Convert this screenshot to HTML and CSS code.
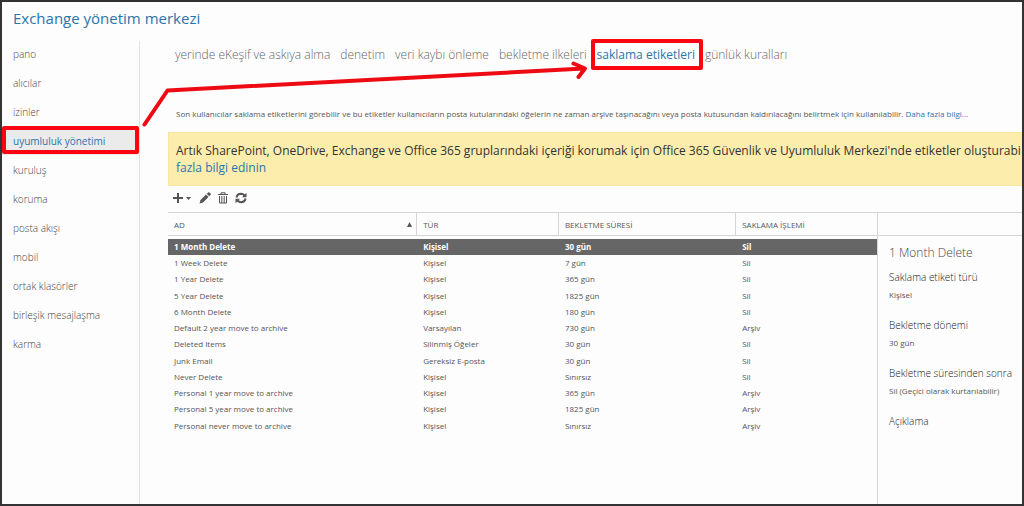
FILE: index.html
```
<!DOCTYPE html>
<html lang="tr">
<head>
<meta charset="utf-8">
<title>Exchange yönetim merkezi</title>
<link rel="stylesheet" href="styles.css">
</head>
<body>
<div class="frame">
  <header class="brand"><h1>Exchange yönetim merkezi</h1></header>
  <div class="body">
    <nav class="side" aria-label="Ana menü">
      <a href="#">pano</a>
      <a href="#">alıcılar</a>
      <a href="#">izinler</a>
      <a href="#" class="active marked" aria-current="page">uyumluluk yönetimi</a>
      <a href="#">kuruluş</a>
      <a href="#">koruma</a>
      <a href="#">posta akışı</a>
      <a href="#">mobil</a>
      <a href="#">ortak klasörler</a>
      <a href="#">birleşik mesajlaşma</a>
      <a href="#">karma</a>
    </nav>
    <main class="main">
      <nav class="tabs" aria-label="Sekmeler">
        <a href="#">yerinde eKeşif ve askıya alma</a>
        <a href="#">denetim</a>
        <a href="#">veri kaybı önleme</a>
        <a href="#">bekletme ilkeleri</a>
        <a href="#" class="active marked" aria-current="page">saklama etiketleri</a>
        <a href="#">günlük kuralları</a>
      </nav>
      <p class="intro">Son kullanıcılar saklama etiketlerini görebilir ve bu etiketler kullanıcıların posta kutularındaki öğelerin ne zaman arşive taşınacağını veya posta kutusundan kaldırılacağını belirtmek için kullanılabilir. <a href="#">Daha fazla bilgi...</a></p>
      <div class="banner">Artık SharePoint, OneDrive, Exchange ve Office 365 gruplarındaki içeriği korumak için Office 365 Güvenlik ve Uyumluluk Merkezi'nde etiketler oluşturabi<br><a href="#">fazla bilgi edinin</a></div>
      <div class="toolbar">
        <button type="button" aria-label="Yeni"><svg width="20" height="12" viewBox="0 0 20 12"><path d="M6 1v10M1 6h10" stroke="currentColor" stroke-width="2" fill="none"/><path d="M14 5h5l-2.500 3z" fill="currentColor"/></svg></button>
        <button type="button" aria-label="Düzenle"><svg width="12" height="12" viewBox="0 0 12 12"><path d="M.5 11.500l1-3.500L7 2.500 9.500 5 4 10.500zM7.700 1.800L9.200.4q.6-.5 1.200 0l1.200 1.200q.5.6 0 1.200L10.200 4.300z" fill="currentColor"/></svg></button>
        <button type="button" aria-label="Sil"><svg width="10" height="12" viewBox="0 0 10 12"><path d="M0 2.500h10M3 2V.8h4V2" stroke="currentColor" fill="none"/><path d="M1.500 4v7h7V4M3.800 4v7M6.200 4v7" stroke="currentColor" fill="none"/></svg></button>
        <button type="button" aria-label="Yenile"><svg width="12" height="12" viewBox="0 0 12 12"><path d="M1.500 5.500Q2 2 6 1.800q2 0 3.500 1.700M10.500 6.500Q10 10 6 10.200q-2 0-3.500-1.700" stroke="currentColor" stroke-width="2" fill="none"/><path d="M11.500.8v4.400H7zM.5 11.200V6.800H5z" fill="currentColor"/></svg></button>
      </div>
      <div class="split">
        <div class="list">
          <table>
            <colgroup><col class="c-name"><col class="c-type"><col class="c-time"><col class="c-act"></colgroup>
            <thead><tr><th scope="col"><span class="sorted">AD<svg width="5" height="5" viewBox="0 0 5 5"><path d="M0 5L2.500 0 5 5z" fill="currentColor"/></svg></span></th><th scope="col">TÜR</th><th scope="col">BEKLETME SÜRESİ</th><th scope="col">SAKLAMA İŞLEMİ</th></tr></thead>
            <tbody>
              <tr class="selected"><td>1 Month Delete</td><td>Kişisel</td><td>30 gün</td><td>Sil</td></tr>
              <tr><td>1 Week Delete</td><td>Kişisel</td><td>7 gün</td><td>Sil</td></tr>
              <tr><td>1 Year Delete</td><td>Kişisel</td><td>365 gün</td><td>Sil</td></tr>
              <tr><td>5 Year Delete</td><td>Kişisel</td><td>1825 gün</td><td>Sil</td></tr>
              <tr><td>6 Month Delete</td><td>Kişisel</td><td>180 gün</td><td>Sil</td></tr>
              <tr><td>Default 2 year move to archive</td><td>Varsayılan</td><td>730 gün</td><td>Arşiv</td></tr>
              <tr><td>Deleted Items</td><td>Silinmiş Öğeler</td><td>30 gün</td><td>Sil</td></tr>
              <tr><td>Junk Email</td><td>Gereksiz E-posta</td><td>30 gün</td><td>Sil</td></tr>
              <tr><td>Never Delete</td><td>Kişisel</td><td>Sınırsız</td><td>Sil</td></tr>
              <tr><td>Personal 1 year move to archive</td><td>Kişisel</td><td>365 gün</td><td>Arşiv</td></tr>
              <tr><td>Personal 5 year move to archive</td><td>Kişisel</td><td>1825 gün</td><td>Arşiv</td></tr>
              <tr><td>Personal never move to archive</td><td>Kişisel</td><td>Sınırsız</td><td>Arşiv</td></tr>
            </tbody>
          </table>
        </div>
        <aside class="details">
          <div class="details-head"></div>
          <div class="details-body">
            <h2>1 Month Delete</h2>
            <section><h3>Saklama etiketi türü</h3><p>Kişisel</p></section>
            <section><h3>Bekletme dönemi</h3><p>30 gün</p></section>
            <section><h3>Bekletme süresinden sonra</h3><p>Sil (Geçici olarak kurtarılabilir)</p></section>
            <section><h3>Açıklama</h3></section>
          </div>
        </aside>
      </div>
    </main>
  </div>
  <svg class="arrow" width="600" height="130" viewBox="0 0 600 130" aria-hidden="true"><path d="M144.500 124.500L167.500 90.500 584 68.500M573.500 63.500L585 68.500 578.500 77" fill="none" stroke="#ee0a12" stroke-width="4" stroke-linecap="round" stroke-linejoin="round"/></svg>
</div>
</body>
</html>
```
FILE: styles.css
```
* { box-sizing: border-box; }
body { margin: 0; font-family: "Open Sans", "Noto Sans", sans-serif; font-size: 8px; color: #555; background: #fdfdfd; }
a { color: #2a75ac; text-decoration: none; }
h1, h2, h3, p { margin: 0; font-weight: 400; }
.frame { position: relative; display: flex; flex-direction: column; min-height: 100vh; border: 2px solid #333335; overflow: hidden; }
.brand { padding: 4px 11px 11px; }
h1 { font-size: 15px; line-height: 24px; color: #2a75ac; }
.body { display: flex; flex: 1; }
.side { flex: 0 0 138px; border-right: 1px solid #e3e3e3; }
.side a { display: block; padding: 0 11px; margin-bottom: 2px; font-size: 10px; line-height: 27px; font-weight: 300; color: #444; }
.side a.active { background: #ebebeb; color: #2a75ac; font-weight: 400; }
.marked { position: relative; }
.marked::after { content: ""; position: absolute; border: 4px solid #fa0510; border-radius: 2px; inset: -2px 0 1px; }
.main { flex: 1; min-width: 0; display: flex; flex-direction: column; padding-left: 28px; }
.tabs { display: flex; gap: 10px; padding: 0 7px; font-size: 12px; line-height: 28px; white-space: nowrap; }
.tabs a { color: #666; font-weight: 300; }
.tabs a.active { color: #2a75ac; font-weight: 400; }
.tabs .marked::after { inset: -2px -8px -1px -6px; }
.intro { padding: 37px 8px 10px; line-height: 16px; white-space: nowrap; }
.banner { padding: 9px 7px 9px; background: #fcedad; border: 1px solid #f6e6a4; border-right: 0; font-size: 12px; line-height: 17px; color: #333; white-space: nowrap; overflow: hidden; }
.toolbar { display: flex; align-items: center; gap: 7px; padding: 6px 4px 8px; }
.toolbar button { display: flex; padding: 0; border: 0; background: none; color: #555; }
.split { display: flex; flex: 1; border-top: 1px solid #d5d5d5; }
.list { flex: 1; min-width: 0; }
table { width: 100%; table-layout: fixed; border-collapse: separate; border-spacing: 0; }
.c-name { width: 35%; }
.c-type { width: 20%; }
.c-time { width: 25%; }
.c-act { width: 20%; }
th, td { padding: 0 6px; text-align: left; white-space: nowrap; }
th { height: 23px; font-weight: 400; border-bottom: 1px solid #d5d5d5; }
th + th { border-left: 1px solid #d5d5d5; }
.sorted { display: flex; justify-content: space-between; align-items: center; margin-right: -2px; }
tbody::before { content: ""; display: block; height: 3px; }
td { line-height: 16px; }
td + td { padding-left: 7px; }
tr:nth-child(4n) td { line-height: 17px; }
.selected td { background: #666; color: #fff; font-weight: 700; }
.details { flex: 0 0 145px; border-left: 1px solid #d5d5d5; }
.details-head { height: 23px; border-bottom: 1px solid #d5d5d5; }
.details-body { padding: 7px 0 0 11px; white-space: nowrap; }
h2 { font-size: 12px; line-height: 20px; font-weight: 300; color: #444; }
h3 { font-size: 10px; line-height: 16px; font-weight: 300; color: #222; }
section { padding-top: 6px; min-height: 48px; }
section p { line-height: 20px; }
.arrow { position: absolute; left: -2px; top: -2px; pointer-events: none; }
```
